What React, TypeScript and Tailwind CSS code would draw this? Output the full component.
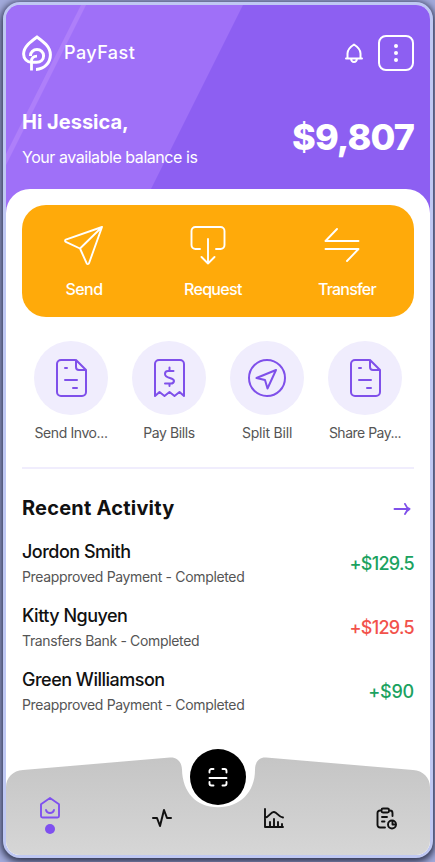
import React from 'react';

const SendIcon = () => (
  <svg className="h-12 w-12" viewBox="0 0 48 48" fill="none" stroke="currentColor" strokeWidth="1.9" strokeLinecap="round" strokeLinejoin="round">
    <path d="M42 6 5.8 18.6c-1 .4-1 1.9 0 2.3L20 27.5l6.700 14.900c.5 1 1.900 1 2.300-.1L42 6 20 27.500" />
  </svg>
);

const RequestIcon = () => (
  <svg className="h-12 w-12" viewBox="0 0 48 48" fill="none" stroke="currentColor" strokeWidth="1.9" strokeLinecap="round" strokeLinejoin="round">
    <path d="M16 28h-4.500a4 4 0 0 1-4-4V10a4 4 0 0 1 4-4h25a4 4 0 0 1 4 4v14a4 4 0 0 1-4 4H32M24 18v24.500M17.500 36l6.500 6.500 6.500-6.500" />
  </svg>
);

const TransferIcon = () => (
  <svg className="h-12 w-12" viewBox="0 0 48 48" fill="none" stroke="currentColor" strokeWidth="1.9" strokeLinecap="round" strokeLinejoin="round">
    <path d="M19 8 7.500 20h33M7.500 28h33L29 40" />
  </svg>
);

const InvoiceIcon = () => (
  <svg className="h-12 w-12" viewBox="0 0 48 48" fill="none" stroke="currentColor" strokeWidth="2" strokeLinecap="round" strokeLinejoin="round">
    <path d="M28 6H14a4 4 0 0 0-4 4v28a4 4 0 0 0 4 4h21a4 4 0 0 0 4-4V16L29 6v7a3 3 0 0 0 3 3h7M18 14h2M18 26h12M26 34h4" />
  </svg>
);

const BillIcon = () => (
  <svg className="h-12 w-12" viewBox="0 0 48 48" fill="none" stroke="currentColor" strokeWidth="2" strokeLinecap="round" strokeLinejoin="round">
    <path d="M10 42V10a4 4 0 0 1 4-4h21a4 4 0 0 1 4 4v32l-4.500-4-5 4-5-4-5 4-5-4-4.500 4ZM28.500 17H23a3 3 0 0 0-3 3c0 5 9 3 9 7a3 3 0 0 1-3 2.500h-6M24.500 13.500V17M24.500 29.500V32" />
  </svg>
);

const SplitIcon = () => (
  <svg className="h-12 w-12" viewBox="0 0 48 48" fill="none" stroke="currentColor" strokeWidth="2" strokeLinejoin="round">
    <circle cx="24" cy="24" r="18" />
    <path d="m33 16-19.500 8 8.500 2 2.500 8.500Z" />
  </svg>
);

const actions = [
  { label: 'Send', icon: <SendIcon />, style: 'w-12 items-center', text: 'tracking-[-0.5px]' },
  { label: 'Request', icon: <RequestIcon />, style: 'w-[58px] items-start', text: 'tracking-[-0.7px]' },
  { label: 'Transfer', icon: <TransferIcon />, style: 'w-[58px] items-start', text: 'tracking-[-0.8px]' },
];

const services = [
  { label: 'Send Invo...', icon: <InvoiceIcon />, text: 'tracking-[-0.4px]' },
  { label: 'Pay Bills', icon: <BillIcon />, text: 'tracking-[-0.4px]' },
  { label: 'Split Bill', icon: <SplitIcon />, text: 'tracking-[-0.2px]' },
  { label: 'Share Pay...', icon: <InvoiceIcon />, text: 'tracking-[-0.5px]' },
];

const activity = [
  { name: 'Jordon Smith', info: 'Preapproved Payment - Completed', amount: '+$129.5', color: 'text-[#1ba260] tracking-[-0.7px]' },
  { name: 'Kitty Nguyen', info: 'Transfers Bank - Completed', amount: '+$129.5', color: 'text-[#f2524b] tracking-[-0.7px]' },
  { name: 'Green Williamson', info: 'Preapproved Payment - Completed', amount: '+$90', color: 'text-[#1ba260] tracking-[-0.2px]' },
];

const Header: React.FC = () => (
  <header className="relative h-[184px] shrink-0 px-4 pt-[30px] text-white">
    <svg className="absolute left-0 top-0 h-[230px] w-full" viewBox="0 0 424 230" preserveAspectRatio="none">
      <rect width="424" height="230" fill="#8d5ff2" />
      <path d="M0 0H237L122 230H0Z" fill="#9f70f8" />
      <path d="M75 0h5L0 160v-11Z" fill="#ae7ffa" />
    </svg>
    <div className="relative flex h-9 items-center justify-between">
      <div className="flex items-center gap-3">
        <svg className="h-9 w-[30px]" viewBox="0 0 30 36" fill="none" stroke="currentColor" strokeWidth="3">
          <path d="M14 34.400c8.200-.2 14.400-6.500 14.400-14.700C28.400 11.500 21 6.300 15 2 9 6.300 1.600 11.500 1.600 19c0 5 3.600 8.300 8 8.300h5c4.200 0 7-2.900 7-6.500s-2.900-6.300-6.600-6.300-6.600 2.800-6.600 6.500" />
          <path d="M9.500 35.400V26.500c0-3.400 2-5.400 5.500-5.400" strokeWidth="2.800" />
        </svg>
        <span className="text-lg font-medium tracking-[0.45px]">PayFast</span>
      </div>
      <div className="flex items-center gap-3">
        <svg className="h-6 w-6" viewBox="0 0 24 24" fill="none" stroke="currentColor" strokeWidth="2" strokeLinecap="round" strokeLinejoin="round">
          <path d="M4 17.500h16M5.500 17.500v-5C5.500 8 8 6 12 3.500c4 2.500 6.500 4.500 6.500 9v5M9 17.500c.2 2.300 1.200 3.500 3 3.500s2.800-1.200 3-3.500" />
        </svg>
        <button className="flex h-9 w-9 flex-col items-center justify-center gap-[3px] rounded-lg border-2 border-white">
          <span className="h-1 w-1 rounded-full bg-white" />
          <span className="h-1 w-1 rounded-full bg-white" />
          <span className="h-1 w-1 rounded-full bg-white" />
        </button>
      </div>
    </div>
    <div className="relative mt-9 flex items-center justify-between">
      <div className="whitespace-nowrap">
        <h1 className="text-xl leading-[30px] font-bold">Hi Jessica,</h1>
        <p className="mt-2 text-base leading-6 tracking-[-0.45px]">Your available balance is</p>
      </div>
      <span className="-mt-0.5 text-4xl leading-[54px] font-extrabold tracking-[-0.9px]">$9,807</span>
    </div>
  </header>
);

const BottomNav: React.FC = () => (
  <nav className="absolute inset-x-0 bottom-0 h-[106px]">
    <svg className="absolute inset-0 h-full w-full" viewBox="0 0 424 106">
      <defs>
        <linearGradient id="nav" x1="0" y1="0" x2="0" y2="1">
          <stop offset="0" stopColor="#c5c5c5" />
          <stop offset="1" stopColor="#d6d6d6" />
        </linearGradient>
      </defs>
      <path d="M0 38C0 29 7 21.500 17 21L164 8.500c7-.5 11.500 4 12 12C176.500 43 190 58.300 212 58.300S249 43 249 21c0-8 4-13 11-12.500L407 21c10 .5 17 8 17 17v68H0Z" fill="url(#nav)" />
    </svg>
    <div className="relative flex h-full items-end justify-between px-8 pb-[18px] text-[#111]">
      <div className="mb-[3px] flex flex-col items-center gap-[5px] text-[#7f50ef]">
        <svg className="h-6 w-6" viewBox="0 0 24 24" fill="none" stroke="currentColor" strokeWidth="1.900" strokeLinecap="round" strokeLinejoin="round">
          <path d="m12 3 9 6.200V21a1.500 1.500 0 0 1-1.500 1.500h-15A1.500 1.500 0 0 1 3 21V9.200ZM8 15c1 4 7 4 8 0" />
        </svg>
        <span className="h-2.5 w-2.5 rounded-full bg-[#7f50ef]" />
      </div>
      <svg className="mb-[7px] h-6 w-6" viewBox="0 0 24 24" fill="none" stroke="currentColor" strokeWidth="2" strokeLinecap="round" strokeLinejoin="round">
        <path d="M3 12h4l3 8 4-16 3 8h4" />
      </svg>
      <svg className="mb-[7px] h-6 w-6" viewBox="0 0 24 24" fill="none" stroke="currentColor" strokeWidth="1.900" strokeLinecap="round" strokeLinejoin="round">
        <path d="M3 3v18h18M3 11.500c4.500 0 5.500-6 9-5.500s3.500 4.500 9 5.500M8 20v-4M12 20v-7M16 20v-4M20 20v-2" />
      </svg>
      <svg className="mb-[7px] h-6 w-6" viewBox="0 0 24 24" fill="none" stroke="currentColor" strokeWidth="1.900" strokeLinecap="round" strokeLinejoin="round">
        <path d="M7.500 4.500H6a2.500 2.500 0 0 0-2.500 2.500v12A2.500 2.500 0 0 0 6 21.500h5M15 4.500h1A2.500 2.500 0 0 1 18.500 7v3M9 2.500h4.500a1.500 1.500 0 0 1 1.500 1.500v1a1.500 1.500 0 0 1-1.500 1.500H9A1.500 1.500 0 0 1 7.500 5V4A1.500 1.500 0 0 1 9 2.500ZM8 11h5M8 15.500h2.500M18.500 15v3.500h3" />
        <circle cx="18" cy="18.500" r="4" />
      </svg>
    </div>
    <button className="absolute left-[184px] top-0 flex h-14 w-14 items-center justify-center rounded-full bg-black text-white">
      <svg className="h-6 w-6" viewBox="0 0 24 24" fill="none" stroke="currentColor" strokeWidth="1.900" strokeLinecap="round" strokeLinejoin="round">
        <path d="M3.500 7.500V6a2 2 0 0 1 2-2H7.500M16.500 4h2a2 2 0 0 1 2 2v1.500M3.500 17v1.500a2 2 0 0 0 2 2H7.500M16.500 20.500h2a2 2 0 0 0 2-2V17M3.500 13h17" />
      </svg>
    </button>
  </nav>
);

export default function App() {
  return (
    <div className="h-[862px] w-[435px] overflow-hidden bg-[#a2aadb] pl-[3px] pt-[2px] font-['Inter',sans-serif]">
      <div className="relative flex h-[856px] w-[430px] flex-col overflow-hidden rounded-[17px] border-[3px] border-[#bfc8f3] bg-white shadow-[0_2px_7px_2px_#30354f]">
        <Header />
        <main className="relative flex-1 rounded-t-3xl bg-white px-4 pt-4">
          <div className="flex h-28 justify-around rounded-3xl bg-[#ffaa0a] pt-4 text-white">
            {actions.map((item) => (
              <button key={item.label} className={`flex flex-col gap-2 ${item.style}`}>
                {item.icon}
                <span className={`whitespace-nowrap text-base leading-6 font-medium ${item.text}`}>{item.label}</span>
              </button>
            ))}
          </div>

          <div className="mt-6 flex justify-between px-3">
            {services.map((item) => (
              <button key={item.label} className="flex w-[74px] flex-col items-center gap-[7px]">
                <span className="flex h-[74px] w-[74px] items-center justify-center rounded-full bg-[#f0edfd] text-[#7f50ea]">
                  {item.icon}
                </span>
                <span className={`whitespace-nowrap text-sm leading-[21px] text-[#555] ${item.text}`}>{item.label}</span>
              </button>
            ))}
          </div>

          <div className="mt-6 h-0.5 bg-[#f0edfd]" />

          <div className="mt-6 flex h-[30px] items-center justify-between">
            <h2 className="whitespace-nowrap text-xl font-bold tracking-[0.22px] text-[#111]">Recent Activity</h2>
            <svg className="h-6 w-6 text-[#7f50ea]" viewBox="0 0 24 24" fill="none" stroke="currentColor" strokeWidth="1.900" strokeLinecap="round" strokeLinejoin="round">
              <path d="M4.500 13h15M15 8c1 2.500 2 4 4.500 5-2.500 1-3.500 2.500-4.500 5" />
            </svg>
          </div>

          <ul className="mt-[15px] space-y-4">
            {activity.map((item) => (
              <li key={item.name} className="flex h-12 items-center justify-between whitespace-nowrap">
                <div>
                  <p className="text-lg leading-[27px] font-medium tracking-[-0.5px] text-[#111]">{item.name}</p>
                  <p className="mt-px text-sm leading-[21px] tracking-[-0.34px] text-[#555]">{item.info}</p>
                </div>
                <span className={`mt-[3px] text-lg font-medium ${item.color}`}>{item.amount}</span>
              </li>
            ))}
          </ul>
        </main>
        <BottomNav />
      </div>
    </div>
  );
}
